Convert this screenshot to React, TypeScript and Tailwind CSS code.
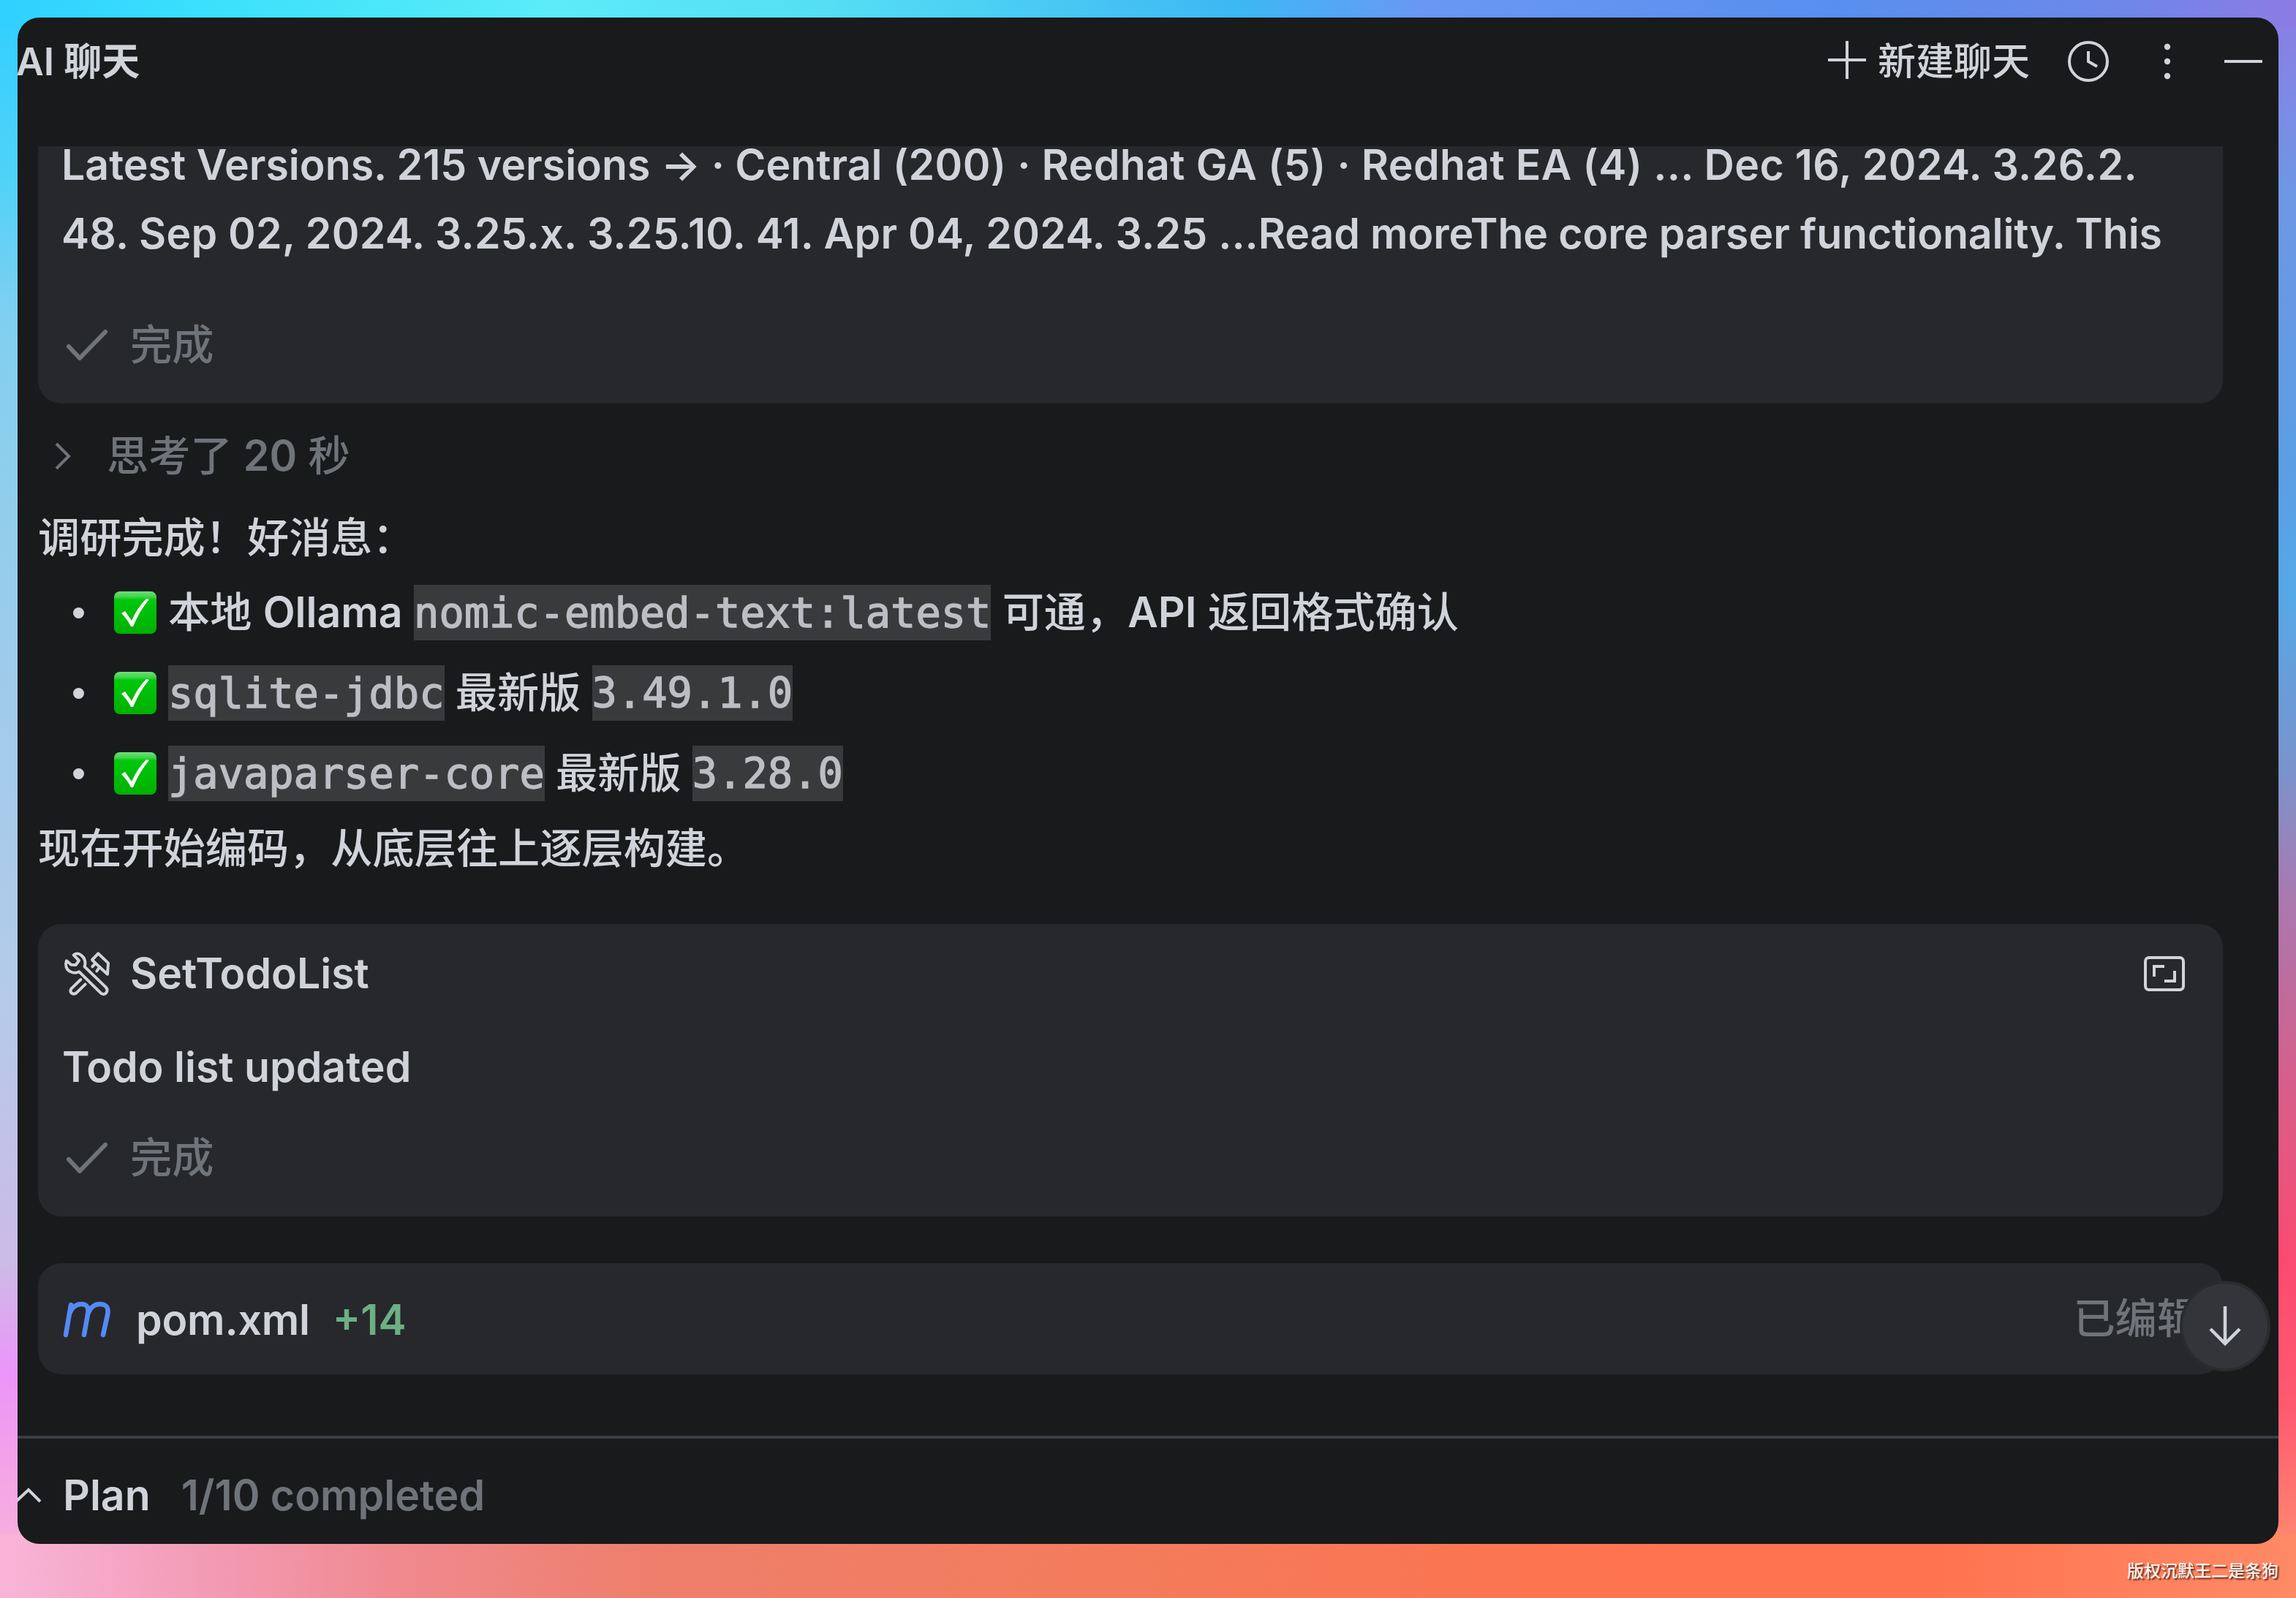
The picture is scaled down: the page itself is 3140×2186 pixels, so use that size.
import React from "react";

interface IFinding {
  before?: React.ReactNode;
  code: string;
  after: React.ReactNode;
  version?: string;
}

const findings: IFinding[] = [
  {
    before: (
      <>
        本地 <b className="font-semibold">Ollama </b>
      </>
    ),
    code: "nomic-embed-text:latest",
    after: (
      <>
        {" "}
        可通，<b className="font-semibold">API</b> 返回格式确认
      </>
    ),
  },
  { code: "sqlite-jdbc", after: " 最新版 ", version: "3.49.1.0" },
  { code: "javaparser-core", after: " 最新版 ", version: "3.28.0" },
];

const ToolsIcon = () => (
  <svg
    className="w-[90px] h-[80px] shrink-0"
    viewBox="0 0 270 240"
    fill="none"
    stroke="currentColor"
    strokeWidth="12"
    strokeLinejoin="round"
    strokeLinecap="round"
  >
    <path d="M74 43 L96 66 L83 84 L64 83 L45 67 C38 84 44 102 58 110 C71 118 87 117 97 112 L183 197 C191 206 201 206 207 199 C214 191 213 183 206 175 L119 91 C125 74 120 55 106 45 C96 36 84 36 74 43 Z" />
    <path d="M103 144 L64 182 Q58 192 65 199 Q75 207 85 199 L122 163" />
    <path d="M150 63 L175 37 L216 76 L213 122 L164 77 Z" />
    <path d="M164 77 L151 91 M181 93 L169 109" />
  </svg>
);

const CheckIcon = () => (
  <svg
    className="w-[58px] h-[44px] shrink-0"
    viewBox="0 0 58 44"
    fill="none"
    stroke="currentColor"
    strokeWidth="6"
    strokeLinecap="round"
    strokeLinejoin="round"
  >
    <path d="M4 24 L19 40 L54 4" />
  </svg>
);

const ExpandIcon = () => (
  <svg
    className="w-[56px] h-[48px]"
    viewBox="0 0 56 48"
    fill="none"
    stroke="currentColor"
    strokeWidth="4"
  >
    <rect x="2" y="2" width="52" height="44" rx="5" />
    <path d="M14 28 V14 H28" />
    <path d="M28 34 H42 V20" />
  </svg>
);

const MavenIcon = () => (
  <svg
    className="w-[66px] h-[50px] shrink-0"
    viewBox="0 0 66 50"
    fill="none"
    stroke="currentColor"
    strokeWidth="6.5"
    strokeLinecap="round"
    strokeLinejoin="round"
  >
    <path d="M4 46 L11 5" />
    <path d="M9 17 C12 9 18 4 25 4 C33 4 36 9 34 18 L29 46" />
    <path d="M34 18 C37 9 43 4 50 4 C60 4 63 9 61 19 L55 46" />
  </svg>
);

const DoneMark = () => (
  <div className="flex items-center gap-[30px] text-[#6f737a] h-20">
    <CheckIcon />
    <span>完成</span>
  </div>
);

const CheckBadge = () => (
  <svg className="w-[58px] h-[58px] shrink-0" viewBox="0 0 58 58">
    <defs>
      <linearGradient id="badge" x1="0" y1="0" x2="0" y2="1">
        <stop offset="0" stopColor="#6ee07a" />
        <stop offset="0.13" stopColor="#3fd548" />
        <stop offset="0.2" stopColor="#00c80c" />
        <stop offset="1" stopColor="#00b000" />
      </linearGradient>
    </defs>
    <rect width="58" height="58" rx="8" fill="url(#badge)" />
    <path
      d="M10 30 L15 27 L24 40 Q32 22 44 10 L48 11 Q35 26 26 48 L23 48 Q18 38 10 30 Z"
      fill="#fff"
    />
  </svg>
);

const Code = ({ children }: { children: React.ReactNode }) => (
  <code className="h-[76px] leading-[76px] bg-[#393a3c] text-[#bcbec4] font-normal font-['DejaVu_Sans_Mono',monospace] text-[57px] [-webkit-text-stroke:1.4px_#bcbec4]">
    {children}
  </code>
);

const Header = () => (
  <header className="h-[176px] shrink-0 flex items-start justify-between text-[52px] leading-[122px] text-[#d1d3da]">
    <h1 className="font-semibold whitespace-pre -ml-[2px]">AI 聊天</h1>
    <div className="flex items-center h-[116px] pr-[22px]">
      <button className="flex items-center gap-[16px]">
        <svg
          className="w-[52px] h-[52px]"
          viewBox="0 0 52 52"
          stroke="currentColor"
          strokeWidth="4"
        >
          <path d="M26 0 V52 M0 26 H52" />
        </svg>
        <span className="pt-[6px] pr-px">新建聊天</span>
      </button>
      <svg
        className="w-[56px] h-[56px] ml-[51px] mt-1"
        viewBox="0 0 56 56"
        fill="none"
        stroke="currentColor"
        strokeWidth="4"
      >
        <circle cx="28" cy="28" r="26" />
        <path d="M28 14 V28 L40 35" />
      </svg>
      <svg
        className="w-[10px] h-[50px] ml-[75px] mt-1"
        viewBox="0 0 10 50"
        fill="currentColor"
      >
        <circle cx="5" cy="5" r="4.2" />
        <circle cx="5" cy="25" r="4.2" />
        <circle cx="5" cy="45" r="4.2" />
      </svg>
      <span className="w-[52px] h-1 ml-[73px] mt-1 bg-[#d1d3da]" />
    </div>
  </header>
);

const App = () => {
  return (
    <main className="w-[3140px] h-[2186px] overflow-hidden px-6 pt-6 relative bg-no-repeat bg-[linear-gradient(90deg,#30d0ff_0%,#3be0fc_9%,#5aecf8_24%,#55def4_36%,#3cb8f3_54%,#6a97f4_62%,#588fee_80%,#6a88ea_91%,#8c7ce4_100%),linear-gradient(90deg,#f8b5d8_0%,#f39bb5_9%,#f08a90_17%,#ee7f6c_28%,#f37c5c_48%,#fd7450_68%,#ff7350_84%,#ff8a66_100%),linear-gradient(180deg,#30d0ff_0%,#4fd2f8_11%,#80cff0_20%,#8ccfed_28%,#9dcbeb_41%,#b4cbe9_62%,#ccbbe7_79%,#ec94fa_86%,#f5a6e4_93%,#f9b8d6_100%),linear-gradient(180deg,#8c7ce4_0%,#6f97e4_12%,#5b9fe4_30%,#55a8e6_37%,#7a94cc_48%,#a87ab0_56%,#d4608c_67%,#fb4a70_79%,#ff5a70_88%,#ff8470_96%,#ff9a70_100%)] bg-[length:3140px_40px,3140px_88px,60px_2186px,60px_2186px] bg-[position:0_0,0_100%,0_0,100%_0]">
      <div className="w-[3092px] h-[2088px] flex flex-col rounded-[30px] overflow-hidden bg-[#191a1c] text-[#d1d3da] font-medium text-[57.2px] leading-20 font-['Inter','Noto_Sans_CJK_SC',sans-serif]">
        <Header />

        <div className="h-[1764px] shrink-0 overflow-hidden pl-7 pr-19 flex flex-col">
          <section className="h-[352px] shrink-0 rounded-b-[32px] bg-[#27282c] pl-[32px] overflow-hidden">
            <div className="-mt-[21px] leading-[94px] whitespace-nowrap font-semibold">
              <p>
                Latest Versions. 215 versions → · Central{" "}
                <span className="tracking-[0.36px]">
                  (200) · Redhat GA (5) · Redhat EA (4) ... Dec 16, 2024.
                  3.26.2.
                </span>
              </p>
              <p>
                <span className="tracking-[0.25px]">
                  48. Sep 02, 2024. 3.25.x. 3.25.10. 41. Apr 04, 2024. 3.25{" "}
                </span>
                <span className="tracking-[-0.1px]">
                  ...Read moreThe core parser functionality. This
                </span>
              </p>
            </div>
            <div className="mt-[65px] pl-[6px]">
              <DoneMark />
            </div>
          </section>

          <div className="mt-8 h-20 shrink-0 flex items-center text-[#6f737a] pl-[22px]">
            <svg
              className="w-[24px] h-[38px] mr-[48px]"
              viewBox="0 0 24 38"
              fill="none"
              stroke="currentColor"
              strokeWidth="4"
            >
              <path d="M3 2 L20 19 L3 36" />
            </svg>
            <span>
              思考了 <b className="font-semibold">20</b> 秒
            </span>
          </div>

          <p className="mt-[32px] shrink-0">调研完成！好消息：</p>

          <ul className="mt-[7px] shrink-0">
            {findings.map((item) => (
              <li
                key={item.code}
                className="h-[110px] flex items-center pl-[48px] whitespace-pre"
              >
                <span className="w-[15px] h-[15px] rounded-full bg-[#d1d3da] mr-[41px]" />
                <CheckBadge />
                <span className="flex items-center ml-[16px]">
                  {item.before && <span className="pr-px">{item.before}</span>}
                  <Code>{item.code}</Code>
                  <span>{item.after}</span>
                  {item.version && <Code>{item.version}</Code>}
                </span>
              </li>
            ))}
          </ul>

          <p className="mt-[8px] shrink-0">现在开始编码，从底层往上逐层构建。</p>

          <section className="mt-[63px] h-[400px] shrink-0 rounded-[32px] bg-[#27282c] pl-[33px] pr-[52px] pt-[28px]">
            <div className="flex items-center justify-between h-20">
              <div className="flex items-center gap-[12px] -ml-[9px]">
                <ToolsIcon />
                <span className="font-semibold">SetTodoList</span>
              </div>
              <ExpandIcon />
            </div>
            <p className="mt-[48px] font-semibold">Todo list updated</p>
            <div className="mt-[44px] pl-[5px]">
              <DoneMark />
            </div>
          </section>

          <section className="mt-16 h-[152px] shrink-0 rounded-[32px] bg-[#27282c] pl-[34px] pr-[33px] flex items-center">
            <span className="text-[#548af7] pt-[2px]">
              <MavenIcon />
            </span>
            <span className="ml-[34px] pt-[3px] font-semibold tracking-[-0.2px]">
              pom.xml
            </span>
            <span className="ml-[31px] pt-[3px] font-semibold text-[#6cb083]">
              +14
            </span>
            <span className="ml-auto text-[#6f737a]">已编辑</span>
          </section>
        </div>

        <footer className="flex-1 border-t-4 border-[#3c3e44] flex items-center pt-[11px]">
          <svg
            className="w-[36px] h-[24px] -ml-[3px]"
            viewBox="0 0 36 24"
            fill="none"
            stroke="currentColor"
            strokeWidth="4"
          >
            <path d="M1 20 L18 4 L34 20" />
          </svg>
          <span className="ml-[29px] font-semibold">Plan</span>
          <span className="ml-[42px] font-semibold text-[#6f737a]">
            1/10 completed
          </span>
        </footer>
      </div>

      <button className="absolute left-[2981px] top-[1752px] w-[124px] h-[124px] rounded-full border-4 border-[#2a2b2f] bg-[#34353b] text-[#d1d3da] flex items-center justify-center">
        <svg
          className="w-[44px] h-[54px]"
          viewBox="0 0 44 54"
          fill="none"
          stroke="currentColor"
          strokeWidth="4.5"
        >
          <path d="M22 0 V50 M2 31 L22 51 L42 31" />
        </svg>
      </button>

      <span className="absolute right-[24px] bottom-[21px] text-[23px] leading-[36px] font-medium text-[#fff2ec] [text-shadow:2px_2px_2px_#5a2a20] font-['Noto_Sans_CJK_SC',sans-serif]">
        版权沉默王二是条狗
      </span>
    </main>
  );
};

export default App;
